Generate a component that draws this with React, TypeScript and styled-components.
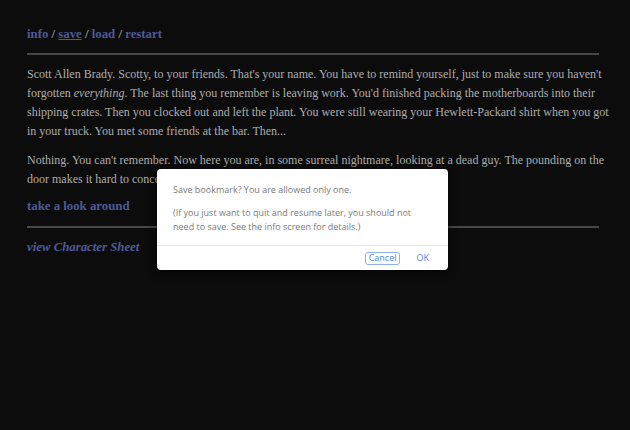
import React from 'react';
import styled, {createGlobalStyle} from "styled-components";

const GlobalStyle = createGlobalStyle`
  html, body {
    margin: 0;
    padding: 0;
    background: #0c0c0c;
  }
  body {
    width: 630px;
    height: 430px;
    overflow: hidden;
  }
`

export default function App() {
    return (
        <Page>
            <GlobalStyle/>
            <Nav>
                <NavLink>info</NavLink> / <NavLink $active>save</NavLink> / <NavLink>load</NavLink> / <NavLink>restart</NavLink>
            </Nav>
            <Rule $top={9}/>
            <Passage>
                Scott Allen Brady. Scotty, to your friends. That's your name. You have to remind yourself, just to make
                sure you haven't<br/>forgotten <em>everything</em>. The last thing you remember is leaving work. You'd
                finished packing the motherboards into their<br/>shipping crates. Then you clocked out and left the plant.
                You were still wearing your Hewlett-Packard shirt when you got<br/>in your truck. You met some friends at
                the bar. Then...
            </Passage>
            <Passage>
                Nothing. You can't remember. Now here you are, in some surreal nightmare, looking at a dead guy. The
                pounding on the<br/>door makes it hard to concentrate.
            </Passage>
            <Choice>take a look around</Choice>
            <Rule $top={10}/>
            <SheetLink>view Character Sheet</SheetLink>

            <Dialog>
                <DialogBody>
                    <DialogText>Save bookmark? You are allowed only one.</DialogText>
                    <DialogText>(If you just want to quit and resume later, you should not need to save. See the info
                        screen for details.)</DialogText>
                </DialogBody>
                <DialogFooter>
                    <DialogButton $focused>Cancel</DialogButton>
                    <DialogButton>OK</DialogButton>
                </DialogFooter>
            </Dialog>
        </Page>
    );
}

const Page = styled.div`
  position: relative;
  width: 630px;
  height: 430px;
  box-sizing: border-box;
  padding: 25px 31px 0 27px;
  font-family: "Liberation Serif", "DejaVu Serif", serif;
  color: #adadad;
`

const Nav = styled.div`
  font-size: 12.8px;
  line-height: 19px;
  font-weight: bold;
  color: #9a9a9a;
`

const NavLink = styled.a<{ $active?: boolean }>`
  color: #4c5b98;
  text-decoration: ${p => p.$active ? 'underline' : 'none'};
  cursor: pointer;
`

const Rule = styled.hr<{ $top: number }>`
  margin: ${p => p.$top}px 0 0 0;
  border: none;
  height: 2px;
  background: #474747;
`

const Passage = styled.p`
  margin: 10px 0 0 0;
  font-size: 12px;
  line-height: 19px;
  white-space: nowrap;
`

const Choice = styled.a`
  display: block;
  margin-top: 8px;
  font-size: 12.8px;
  line-height: 19px;
  font-weight: bold;
  color: #4c5b98;
`

const SheetLink = styled(Choice)`
  margin-top: 10px;
  font-style: italic;
`

const Dialog = styled.div`
  position: absolute;
  left: 157px;
  top: 169px;
  width: 291px;
  height: 101px;
  display: flex;
  flex-direction: column;
  background: #ffffff;
  border-radius: 4px;
  box-shadow: 0 2px 10px rgba(0, 0, 0, 0.6);
  font-family: "Open Sans", "Liberation Sans", sans-serif;
  overflow: hidden;
`

const DialogBody = styled.div`
  display: flex;
  flex-direction: column;
  gap: 9px;
  padding: 14px 32px 11px 16px;
  border-bottom: 1px solid #e6e6e6;
`

const DialogText = styled.div`
  font-size: 9px;
  line-height: 14px;
  color: #7a7a7a;
`

const DialogFooter = styled.div`
  flex: 1;
  display: flex;
  justify-content: flex-end;
  align-items: center;
  gap: 12px;
  padding: 0 15px 0 0;
`

const DialogButton = styled.button<{ $focused?: boolean }>`
  font-family: inherit;
  font-size: 9px;
  line-height: 10px;
  padding: 0 3px;
  height: 13px;
  background: none;
  color: #4f86e8;
  border: 1.5px solid ${p => p.$focused ? '#8fb0f2' : 'transparent'};
  border-radius: 3px;
`
